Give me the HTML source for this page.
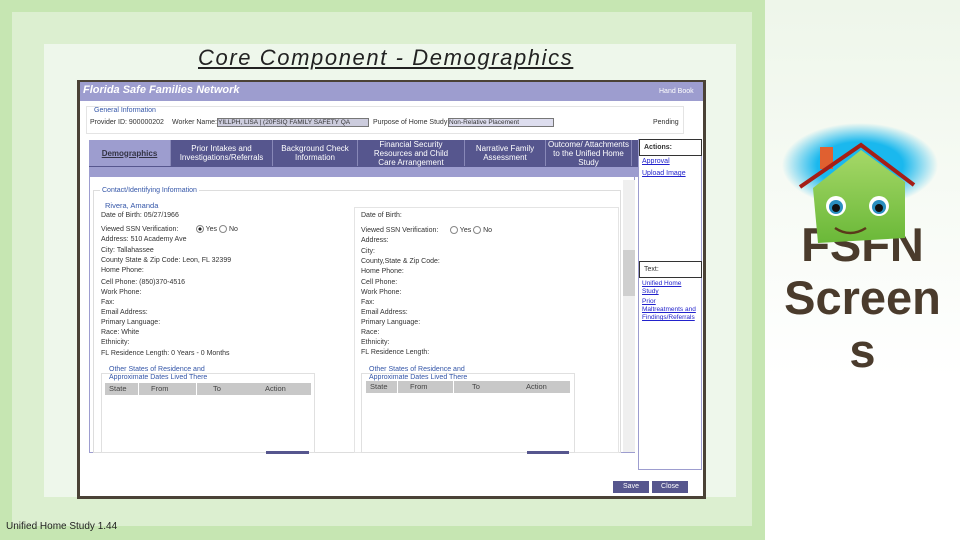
<!DOCTYPE html>
<html><head><meta charset="utf-8"><style>
*{margin:0;padding:0;box-sizing:border-box}
body{width:960px;height:540px;position:relative;overflow:hidden;font-family:"Liberation Sans",sans-serif;background:#fff}
.a{position:absolute}
.s{font-size:7px;color:#333;position:absolute;white-space:nowrap}
.b{font-size:7px;color:#335;position:absolute;white-space:nowrap}
.lnk{font-size:7px;color:#22c;text-decoration:underline;position:absolute;white-space:nowrap}
.tab{position:absolute;top:140px;height:26px;background:#56568e;color:#fff;font-size:8px;text-align:center;line-height:9px;display:flex;align-items:center;justify-content:center;border-right:1px solid #8888b8}
.th{position:absolute;height:12px;background:#c8c8c8;font-size:7.5px;color:#444;line-height:12px;padding-left:4px}
.rad{display:inline-block;width:8px;height:8px;border:1px solid #888;border-radius:50%;vertical-align:middle;background:#fff}
</style></head><body>
<div class="a" style="left:0;top:0;width:765px;height:540px;background:#dcefd0"></div>
<div class="a" style="left:0;top:0;width:765px;height:12px;background:#c6e6b2"></div>
<div class="a" style="left:0;top:0;width:12px;height:540px;background:#c6e6b2"></div>
<div class="a" style="left:0;top:526px;width:765px;height:14px;background:#c6e6b2"></div>
<div class="a" style="left:752px;top:0;width:13px;height:540px;background:#c6e6b2"></div>
<div class="a" style="left:44px;top:44px;width:692px;height:453px;background:#eef7eb"></div>
<div class="a" style="left:765px;top:0;width:195px;height:540px;background:linear-gradient(#eef6ea,#ffffff 70%)"></div>

<div class="a" style="left:198px;top:45px;font-size:22px;letter-spacing:1.6px;color:#222;text-decoration:underline;font-style:italic;white-space:nowrap">Core Component - Demographics</div>

<div class="a" style="left:77px;top:80px;width:629px;height:419px;background:#4a4236"></div>
<div class="a" style="left:80px;top:82px;width:623px;height:414px;background:#fff"></div>
<div class="a" style="left:80px;top:82px;width:623px;height:19px;background:#9d9dcf"></div>
<div class="a" style="left:83px;top:84px;font-size:11px;color:#fff;font-style:italic;font-weight:bold">Florida Safe Families Network</div>
<div class="a" style="left:659px;top:88px;font-size:7px;color:#fff">Hand Book</div>
<div class="a" style="left:86px;top:106px;width:598px;height:28px;border:1px solid #e4e4e4"></div>
<div class="b" style="left:94px;top:107px;color:#3456a8">General Information</div>
<div class="s" style="left:90px;top:119px">Provider ID: 900000202</div>
<div class="s" style="left:172px;top:119px">Worker Name:</div>
<div class="a" style="left:217px;top:118px;width:152px;height:9px;background:#ccd;border:1px solid #777;font-size:6.5px;color:#333;white-space:nowrap;overflow:hidden">YILLPH, LISA | (20FSIQ FAMILY SAFETY QA</div>
<div class="s" style="left:373px;top:119px">Purpose of Home Study:</div>
<div class="a" style="left:448px;top:118px;width:106px;height:9px;background:#dde;border:1px solid #777;font-size:6.5px;color:#333;white-space:nowrap">Non-Relative Placement</div>
<div class="s" style="left:653px;top:119px">Pending</div>
<div class="a" style="left:89px;top:140px;width:549px;height:27px;background:#56568e"></div>
<div class="tab" style="left:89px;width:82px;background:#9d9dcf;color:#334;font-weight:bold;text-decoration:underline">Demographics</div>
<div class="tab" style="left:171px;width:102px">Prior Intakes and<br>Investigations/Referrals</div>
<div class="tab" style="left:273px;width:85px">Background Check<br>Information</div>
<div class="tab" style="left:358px;width:107px">Financial Security<br>Resources and Child<br>Care Arrangement</div>
<div class="tab" style="left:465px;width:81px">Narrative Family<br>Assessment</div>
<div class="tab" style="left:546px;width:86px">Outcome/ Attachments<br>to the Unified Home<br>Study</div>
<div class="a" style="left:89px;top:167px;width:549px;height:10px;background:#9d9dcf"></div>
<div class="a" style="left:89px;top:177px;width:546px;height:276px;border:1px solid #9d9dcf;border-top:none"></div>
<div class="a" style="left:623px;top:180px;width:12px;height:272px;background:#efefef"></div>
<div class="a" style="left:623px;top:250px;width:12px;height:46px;background:#cfcfcf"></div>
<div class="a" style="left:93px;top:190px;width:528px;height:263px;border:1px solid #ddd"></div>
<div class="b" style="left:100px;top:187px;background:#fff;padding:0 2px;color:#3456a8">Contact/Identifying Information</div>
<div class="b" style="left:105px;top:201px;color:#3456a8;font-size:7.5px">Rivera, Amanda</div>
<div class="a" style="left:354px;top:207px;width:265px;height:246px;border:1px solid #e4e4e4"></div>
<div class="s" style="left:101px;top:212px">Date of Birth: 05/27/1966</div>
<div class="s" style="left:101px;top:225px">Viewed SSN Verification: &nbsp;&nbsp;&nbsp;&nbsp;&nbsp;&nbsp;&nbsp;&nbsp;<span class="rad" style="background:radial-gradient(#222 35%,#fff 40%)"></span> Yes <span class="rad"></span> No</div>
<div class="s" style="left:101px;top:236px">Address: 510 Academy Ave</div>
<div class="s" style="left:101px;top:247px">City: Tallahassee</div>
<div class="s" style="left:101px;top:257px">County State &amp; Zip Code: Leon, FL 32399</div>
<div class="s" style="left:101px;top:267px">Home Phone:</div>
<div class="s" style="left:101px;top:279px">Cell Phone: (850)370-4516</div>
<div class="s" style="left:101px;top:289px">Work Phone:</div>
<div class="s" style="left:101px;top:299px">Fax:</div>
<div class="s" style="left:101px;top:309px">Email Address:</div>
<div class="s" style="left:101px;top:319px">Primary Language:</div>
<div class="s" style="left:101px;top:329px">Race: White</div>
<div class="s" style="left:101px;top:339px">Ethnicity:</div>
<div class="s" style="left:101px;top:350px">FL Residence Length: 0 Years - 0 Months</div>
<div class="s" style="left:361px;top:212px">Date of Birth:</div>
<div class="s" style="left:361px;top:226px">Viewed SSN Verification: &nbsp;&nbsp;&nbsp;&nbsp;&nbsp;<span class="rad"></span> Yes <span class="rad"></span> No</div>
<div class="s" style="left:361px;top:237px">Address:</div>
<div class="s" style="left:361px;top:248px">City:</div>
<div class="s" style="left:361px;top:258px">County,State &amp; Zip Code:</div>
<div class="s" style="left:361px;top:268px">Home Phone:</div>
<div class="s" style="left:361px;top:279px">Cell Phone:</div>
<div class="s" style="left:361px;top:289px">Work Phone:</div>
<div class="s" style="left:361px;top:299px">Fax:</div>
<div class="s" style="left:361px;top:309px">Email Address:</div>
<div class="s" style="left:361px;top:319px">Primary Language:</div>
<div class="s" style="left:361px;top:329px">Race:</div>
<div class="s" style="left:361px;top:339px">Ethnicity:</div>
<div class="s" style="left:361px;top:349px">FL Residence Length:</div>
<div class="a" style="left:101px;top:373px;width:214px;height:80px;border:1px solid #e0e0e0"></div>
<div class="b" style="left:109px;top:366px;color:#3456a8;line-height:8px">Other States of Residence and<br>Approximate Dates Lived There</div>
<div class="th" style="left:105px;top:383px;width:33px">State</div>
<div class="th" style="left:139px;top:383px;width:57px;padding-left:12px">From</div>
<div class="th" style="left:197px;top:383px;width:56px;padding-left:16px">To</div>
<div class="th" style="left:253px;top:383px;width:58px;padding-left:12px">Action</div>
<div class="a" style="left:266px;top:451px;width:43px;height:3px;background:#56568e"></div>
<div class="a" style="left:361px;top:373px;width:214px;height:80px;border:1px solid #e0e0e0"></div>
<div class="b" style="left:369px;top:366px;color:#3456a8;line-height:8px">Other States of Residence and<br>Approximate Dates Lived There</div>
<div class="th" style="left:366px;top:381px;width:31px">State</div>
<div class="th" style="left:398px;top:381px;width:55px;padding-left:12px">From</div>
<div class="th" style="left:454px;top:381px;width:58px;padding-left:18px">To</div>
<div class="th" style="left:512px;top:381px;width:58px;padding-left:14px">Action</div>
<div class="a" style="left:527px;top:451px;width:42px;height:3px;background:#56568e"></div>
<div class="a" style="left:638px;top:139px;width:64px;height:331px;border:1px solid #9d9dcf"></div>
<div class="a" style="left:639px;top:139px;width:63px;height:17px;border:1px solid #333;font-size:7px;font-weight:bold;color:#333;padding:4px 0 0 4px">Actions:</div>
<div class="lnk" style="left:642px;top:158px">Approval</div>
<div class="lnk" style="left:642px;top:170px">Upload Image</div>
<div class="a" style="left:639px;top:261px;width:63px;height:17px;border:1px solid #333;font-size:7px;color:#333;padding:4px 0 0 4px">Text:</div>
<div class="lnk" style="left:642px;top:280px;line-height:8px;font-size:6.5px">Unified Home<br>Study</div>
<div class="lnk" style="left:642px;top:298px;line-height:8px;font-size:6.5px">Prior<br>Maltreatments and<br>Findings/Referrals</div>
<div class="a" style="left:613px;top:481px;width:36px;height:12px;background:#56568e;color:#fff;font-size:7px;text-align:center;line-height:12px">Save</div>
<div class="a" style="left:652px;top:481px;width:36px;height:12px;background:#56568e;color:#fff;font-size:7px;text-align:center;line-height:12px">Close</div>

<div class="a" style="left:6px;top:521px;font-size:10px;color:#222;white-space:nowrap">Unified Home Study 1.44</div>

<div class="a" style="left:765px;top:218px;width:195px;text-align:center;font-size:47px;font-weight:bold;color:#4a3b2c;line-height:53px">FSFN<br>Screen<br>s</div>
<svg class="a" style="left:780px;top:120px" width="180" height="130" viewBox="0 0 180 130">
<defs><radialGradient id="g"><stop offset="0.55" stop-color="#1ab8ee"/><stop offset="1" stop-color="#1ab8ee" stop-opacity="0"/></radialGradient>
<linearGradient id="h" x1="0" y1="0" x2="0" y2="1"><stop offset="0" stop-color="#a6d868"/><stop offset="1" stop-color="#6ab838"/></linearGradient></defs>
<ellipse cx="80" cy="45" rx="78" ry="42" fill="url(#g)"/>
<rect x="40" y="27" width="13" height="22" fill="#e06030"/>
<path d="M33 68 L81 30 L125 62 L125 118 L38 123 Z" fill="url(#h)"/>
<path d="M20 67 L81 25 L134 65" stroke="#a51e16" stroke-width="4" fill="none"/>
<circle cx="56" cy="86" r="10" fill="#fff"/><circle cx="56" cy="87" r="7" fill="#2a8fc0"/><circle cx="56" cy="88" r="4" fill="#111"/>
<circle cx="99" cy="86" r="10" fill="#fff"/><circle cx="99" cy="87" r="7" fill="#2a8fc0"/><circle cx="99" cy="88" r="4" fill="#111"/>
<path d="M55 108 Q70 118 86 108" stroke="#5a3a1a" stroke-width="2.5" fill="none"/>
</svg>
</body></html>
